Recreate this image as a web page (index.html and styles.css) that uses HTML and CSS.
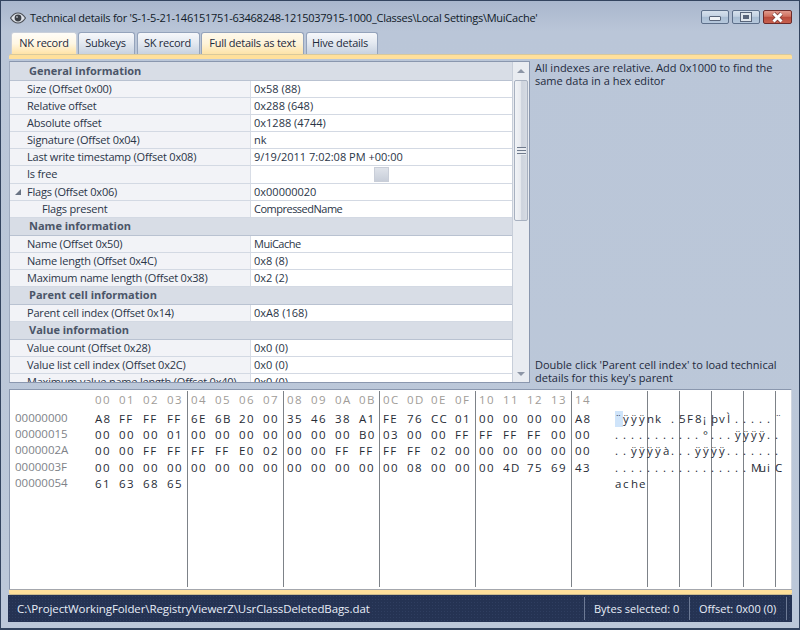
FILE: index.html
```html
<!DOCTYPE html>
<html>
<head>
<meta charset="utf-8">
<title>Technical details</title>
<link rel="stylesheet" href="styles.css">
</head>
<body>
<div class="window">
  <header class="titlebar">
    <svg class="eye" width="16" height="12" viewBox="0 0 16 12"><path d="M.5 6C3 2.200 5.400 1 8 1s5 1.200 7.500 5C13 9.800 10.600 11 8 11S3 9.800.5 6z" fill="#dfe3ea" stroke="#4b4f56" stroke-width="1.200"/><circle cx="8" cy="6" r="3.400" fill="#3c4046"/><circle cx="7" cy="5" r="1" fill="#a9adb3"/></svg>
    <span class="title">Technical details for 'S-1-5-21-146151751-63468248-1215037915-1000_Classes\Local Settings\MuiCache'</span>
    <div class="controls">
      <div class="ctl"><span class="min-glyph"></span></div>
      <div class="ctl ctl-max"><span class="max-glyph"></span></div>
      <div class="ctl ctl-close"><svg width="15" height="11" viewBox="0 0 15 11"><path d="M3.500 1.500l8 8M11.500 1.500l-8 8" stroke="#7a3a36" stroke-width="4.400" fill="none"/><path d="M3.500 1.500l8 8M11.500 1.500l-8 8" stroke="#fff" stroke-width="3" fill="none"/></svg></div>
    </div>
  </header>

  <nav class="tabs">
    <div class="tab tab-active">NK record</div>
    <div class="tab tab-sub">Subkeys</div>
    <div class="tab tab-sk">SK record</div>
    <div class="tab tab-warm">Full details as text</div>
    <div class="tab tab-hive">Hive details</div>
  </nav>
  <div class="band"></div>

  <main class="main">
    <section class="grid">
      <div class="rows">
        <div class="group g19">General information</div>
        <div class="row"><div class="k">Size (Offset 0x00)</div><div class="v">0x58 (88)</div></div>
        <div class="row"><div class="k">Relative offset</div><div class="v">0x288 (648)</div></div>
        <div class="row"><div class="k">Absolute offset</div><div class="v">0x1288 (4744)</div></div>
        <div class="row"><div class="k">Signature (Offset 0x04)</div><div class="v">nk</div></div>
        <div class="row"><div class="k">Last write timestamp (Offset 0x08)</div><div class="v">9/19/2011 7:02:08 PM +00:00</div></div>
        <div class="row row18"><div class="k">Is free</div><div class="v v-check"><span class="check"></span></div></div>
        <div class="row"><div class="k k-parent"><span class="arrow"></span>Flags (Offset 0x06)</div><div class="v">0x00000020</div></div>
        <div class="row"><div class="k k-child">Flags present</div><div class="v v-text">CompressedName</div></div>
        <div class="group">Name information</div>
        <div class="row"><div class="k">Name (Offset 0x50)</div><div class="v v-text">MuiCache</div></div>
        <div class="row"><div class="k">Name length (Offset 0x4C)</div><div class="v">0x8 (8)</div></div>
        <div class="row"><div class="k">Maximum name length (Offset 0x38)</div><div class="v">0x2 (2)</div></div>
        <div class="group">Parent cell information</div>
        <div class="row"><div class="k">Parent cell index (Offset 0x14)</div><div class="v">0xA8 (168)</div></div>
        <div class="group">Value information</div>
        <div class="row"><div class="k">Value count (Offset 0x28)</div><div class="v">0x0 (0)</div></div>
        <div class="row"><div class="k">Value list cell index (Offset 0x2C)</div><div class="v">0x0 (0)</div></div>
        <div class="row"><div class="k">Maximum value name length (Offset 0x40)</div><div class="v">0x0 (0)</div></div>
      </div>
      <div class="scrollbar">
        <div class="sb-btn"><span class="tri-up"></span></div>
        <div class="thumb"><span class="grip"></span></div>
        <div class="sb-btn sb-btn-end"><span class="tri-down"></span></div>
      </div>
    </section>
    <aside class="notes">
      <p>All indexes are relative. Add 0x1000 to find the same data in a hex editor</p>
      <p>Double click 'Parent cell index' to load technical details for this key's parent</p>
    </aside>
  </main>

  <section class="hex">
    <div class="offsets">
      <div>00000000</div><div>00000015</div><div>0000002A</div><div>0000003F</div><div>00000054</div>
    </div>
    <div class="bytes">
      <div class="hexrow hexhead"><span>00</span><span>01</span><span>02</span><span>03</span><span>04</span><span>05</span><span>06</span><span>07</span><span>08</span><span>09</span><span>0A</span><span>0B</span><span>0C</span><span>0D</span><span>0E</span><span>0F</span><span>10</span><span>11</span><span>12</span><span>13</span><span>14</span></div>
      <div class="hexrow"><span>A8</span><span>FF</span><span>FF</span><span>FF</span><span>6E</span><span>6B</span><span>20</span><span>00</span><span>35</span><span>46</span><span>38</span><span>A1</span><span>FE</span><span>76</span><span>CC</span><span>01</span><span>00</span><span>00</span><span>00</span><span>00</span><span>A8</span></div>
      <div class="hexrow"><span>00</span><span>00</span><span>00</span><span>01</span><span>00</span><span>00</span><span>00</span><span>00</span><span>00</span><span>00</span><span>00</span><span>B0</span><span>03</span><span>00</span><span>00</span><span>FF</span><span>FF</span><span>FF</span><span>FF</span><span>00</span><span>00</span></div>
      <div class="hexrow"><span>00</span><span>00</span><span>FF</span><span>FF</span><span>FF</span><span>FF</span><span>E0</span><span>02</span><span>00</span><span>00</span><span>FF</span><span>FF</span><span>FF</span><span>FF</span><span>02</span><span>00</span><span>00</span><span>00</span><span>00</span><span>00</span><span>00</span></div>
      <div class="hexrow"><span>00</span><span>00</span><span>00</span><span>00</span><span>00</span><span>00</span><span>00</span><span>00</span><span>00</span><span>00</span><span>00</span><span>00</span><span>00</span><span>08</span><span>00</span><span>00</span><span>00</span><span>4D</span><span>75</span><span>69</span><span>43</span></div>
      <div class="hexrow"><span>61</span><span>63</span><span>68</span><span>65</span></div>
    </div>
    <div class="ascii">
      <div class="ascrow"><span class="sel">¨</span><span>ÿ</span><span>ÿ</span><span>ÿ</span><span>n</span><span>k</span><span>&nbsp;</span><span>.</span><span>5</span><span>F</span><span>8</span><span>¡</span><span>þ</span><span>v</span><span>Ì</span><span>.</span><span>.</span><span>.</span><span>.</span><span>.</span><span>¨</span></div>
      <div class="ascrow"><span>.</span><span>.</span><span>.</span><span>.</span><span>.</span><span>.</span><span>.</span><span>.</span><span>.</span><span>.</span><span>.</span><span>°</span><span>.</span><span>.</span><span>.</span><span>ÿ</span><span>ÿ</span><span>ÿ</span><span>ÿ</span><span>.</span><span>.</span></div>
      <div class="ascrow"><span>.</span><span>.</span><span>ÿ</span><span>ÿ</span><span>ÿ</span><span>ÿ</span><span>à</span><span>.</span><span>.</span><span>.</span><span>ÿ</span><span>ÿ</span><span>ÿ</span><span>ÿ</span><span>.</span><span>.</span><span>.</span><span>.</span><span>.</span><span>.</span><span>.</span></div>
      <div class="ascrow"><span>.</span><span>.</span><span>.</span><span>.</span><span>.</span><span>.</span><span>.</span><span>.</span><span>.</span><span>.</span><span>.</span><span>.</span><span>.</span><span>.</span><span>.</span><span>.</span><span>.</span><span>M</span><span>u</span><span>i</span><span>C</span></div>
      <div class="ascrow"><span>a</span><span>c</span><span>h</span><span>e</span></div>
    </div>
  </section>
  <div class="band band-bottom"></div>

  <footer class="status">
    <span class="path">C:\ProjectWorkingFolder\RegistryViewerZ\UsrClassDeletedBags.dat</span>
    <span class="cell cell-bytes">Bytes selected: 0</span>
    <span class="cell cell-offset">Offset: 0x00 (0)</span>
  </footer>
</div>
</body>
</html>
```

FILE: styles.css
```css
* { box-sizing: border-box; }
html, body { margin: 0; padding: 0; }
body {
  width: 800px;
  height: 630px;
  overflow: hidden;
  font-family: "Open Sans", "Noto Sans", sans-serif;
  font-size: 11px;
  color: #1e2a3c;
}
.window {
  width: 800px;
  height: 630px;
  display: flex;
  flex-direction: column;
  padding: 0 7px 8px;
  border: 1px solid #33445f;
  border-bottom-width: 2px;
  background: linear-gradient(#a9b7cd 0, #bac6d8 30px, #bcc8d9 100%);
}
.titlebar {
  height: 29px;
  flex: none;
  display: flex;
  align-items: center;
}
.eye { margin: 4px 4px 0 2px; flex: none; }
.title { color: #101a28; font-size: 11px; letter-spacing: -0.250px; white-space: nowrap; margin-top: 4px; }
.controls { margin-left: auto; display: flex; gap: 3px; margin-top: 3px; }
.ctl {
  width: 28px;
  height: 14px;
  border: 1px solid #5d6f8a;
  border-radius: 2px;
  background: linear-gradient(#d6e0ec 0, #c3d1e2 45%, #a9bdd3 50%, #b6c8dc 100%);
  display: flex;
  align-items: center;
  justify-content: center;
}
.ctl-close {
  width: 29px;
  border-color: #6b2a2a;
  background: linear-gradient(#e09a8e 0, #d0705f 45%, #b84a3c 50%, #c8604e 100%);
}
.min-glyph {
  width: 12px;
  height: 5px;
  margin-top: 3px;
  background: #eef1f5;
  border: 1px solid #59657a;
  border-radius: 1px;
}
.max-glyph {
  width: 12px;
  height: 10px;
  background: #dfe5ec;
  border: 3px solid #dfe5ec;
  outline: 1px solid #59657a;
  outline-offset: -1px;
  box-shadow: inset 0 0 0 2px #59657a;
}

.tabs {
  flex: none;
  display: flex;
  margin: 2px 0 0 3px;
  height: 22px;
  gap: 1px;
}
.tab {
  height: 22px;
  border: 1px solid #94a3bb;
  border-bottom: 0;
  border-radius: 3px 3px 0 0;
  display: flex;
  align-items: center;
  justify-content: center;
  color: #1e2a3c;
  letter-spacing: -0.250px;
  background: linear-gradient(#f6f8fb 0, #e5eaf1 45%, #c8d2e0 100%);
  padding-bottom: 3px;
}
.tab-active { width: 66px; border-color: #c9cfda; background: linear-gradient(#fffdf8 0, #fff7e4 50%, #ffe3a6 100%); }
.tab-sub { width: 57px; padding-right: 2px; }
.tab-sk { width: 63px; margin-left: 1px; padding-right: 2px; }
.tab-warm { width: 103px; background: linear-gradient(#fff9ec 0, #fdf3d8 50%, #fde3a8 100%); }
.tab-hive { width: 72px; margin-left: 1px; padding-right: 4px; }

.band {
  flex: none;
  height: 5px;
  margin: 0 0 2px 1px;
  background: #ffe09b;
  border-top: 1px solid #d8c99c;
  border-radius: 2px 2px 0 0;
}
.band-bottom {
  margin: 0 0 0 1px;
  height: 6px;
  border-top: 1px solid #a4a7ad;
  border-radius: 0 0 2px 2px;
  border-bottom: 1px solid #cdbb8c;
}

.main { flex: none; height: 322px; display: flex; }
.grid {
  width: 521px;
  margin-left: 1px;
  height: 322px;
  flex: none;
  display: flex;
  border: 1px solid #8a97ae;
  border-left: 1px solid #a0acc0;
  background: #e8ebf1;
}
.rows { width: 502px; height: 320px; overflow: hidden; flex: none; }
.group {
  height: 18px;
  border-bottom: 1px solid #b9c2d1;
  background: #d8dde6;
  color: #4b5568;
  font-weight: 700;
  padding-left: 19px;
  line-height: 15px;
}
.g19 { height: 19px; line-height: 18px; }
.row { height: 17px; display: flex; border-bottom: 1px solid #d3d9e3; }
.row18 { height: 18px; }
.k {
  width: 241px;
  flex: none;
  background: #f2f3f7;
  padding-left: 17px;
  line-height: 16px;
  letter-spacing: -0.200px;
  white-space: nowrap;
  overflow: hidden;
  border-right: 1px solid #d8dde6;
  color: #2a3547;
}
.k-parent { position: relative; }
.k-child { padding-left: 32px; }
.arrow {
  position: absolute;
  left: 5px;
  top: 5px;
  border-style: solid;
  border-width: 0 0 6px 6px;
  border-color: transparent transparent #6a7484 transparent;
}
.v {
  flex: 1;
  background: #fff;
  padding-left: 3px;
  line-height: 16px;
  white-space: nowrap;
  color: #2a3547;
}
.v-text { letter-spacing: -0.500px; }
.v-check { display: flex; align-items: center; padding-left: 123px; }
.check {
  width: 15px;
  height: 15px;
  border: 1px solid #eef0f4;
  background: linear-gradient(#dfe3ea, #c8ced9);
  outline: 1px solid #c9ced8;
  outline-offset: -1px;
}

.scrollbar {
  width: 17px;
  height: 320px;
  flex: none;
  display: flex;
  flex-direction: column;
  background: #e9ecf1;
  border-left: 1px solid #c7ced9;
}
.sb-btn { height: 17px; flex: none; display: flex; align-items: center; justify-content: center; }
.sb-btn-end { margin-top: auto; }
.tri-up { border-style: solid; border-width: 0 4px 4px; border-color: transparent transparent #8d96a6; }
.tri-down { border-style: solid; border-width: 4px 4px 0; border-color: #8d96a6 transparent transparent; }
.thumb {
  height: 141px;
  margin: 1px 1px 0;
  flex: none;
  border: 1px solid #a8b1c0;
  border-radius: 2px;
  background: linear-gradient(90deg, #f1f3f6 0, #e7eaef 45%, #cdd3dd 55%, #d6dbe3 100%);
  display: flex;
  align-items: center;
  justify-content: center;
}
.grip {
  width: 9px;
  height: 8px;
  background: repeating-linear-gradient(#6f7a8c 0 1px, #e9ecf1 1px 3px);
}

.notes {
  flex: 1;
  padding: 0 8px 0 5px;
  display: flex;
  flex-direction: column;
  justify-content: space-between;
  line-height: 13px;
  color: #1e2a3c;
}
.notes p { margin: 0; }
.notes p:last-child { width: 250px; margin-bottom: -1px; }

.hex {
  flex: none;
  height: 200px;
  margin: 6px 0 0 1px;
  display: flex;
  background: #fff;
  border-top: 1px solid #8a97ae;
  border-left: 1px solid #8a97ae;
  border-right: 1px solid #cfd5df;
  padding-bottom: 2px;
  overflow: hidden;
}
.offsets {
  width: 81px;
  flex: none;
  padding: 20px 0 0 5px;
  color: #7e8288;
  font-size: 11.500px;
}
.offsets div { height: 16.200px; line-height: 16px; }
.bytes {
  width: 504px;
  flex: none;
  padding-top: 1px;
  background-image: repeating-linear-gradient(90deg, transparent 0 95px, #7d8288 95px 96px);
  background-position: 1px 0;
  margin-top: 1px;
}
.hexrow { display: flex; height: 16.200px; line-height: 16px; color: #262c36; font-size: 11.500px; letter-spacing: 1.300px; }
.hexrow span { width: 24px; padding-left: 4px; flex: none; }
.hexhead { height: 19px; color: #a09c98; line-height: 15px; }
.ascii {
  width: 188px;
  flex: none;
  margin-top: 1px;
  padding: 20px 0 0 20px;
  font-size: 11.500px;
  color: #262c36;
  background-image: repeating-linear-gradient(90deg, transparent 0 31px, #7d8288 31px 32px);
  background-position: 21px 0;
}
.ascrow { display: flex; height: 16.200px; line-height: 16px; }
.ascrow span { width: 8px; flex: none; }
.ascrow .sel { background: #cfe4fa; }

.status {
  flex: none;
  height: 27px;
  display: flex;
  align-items: center;
  background-color: #253353;
  background-image: radial-gradient(#2f3e60 0.6px, transparent 0.8px);
  background-size: 3px 3px;
  color: #e8eef8;
}
.path { padding-left: 9px; font-size: 11.500px; letter-spacing: -0.090px; }
.cell { border-left: 1px solid #6d7a95; padding-left: 9px; height: 23px; line-height: 23px; }
.cell-bytes { margin-left: auto; width: 105px; }
.cell-offset { width: 98px; border-right: 1px solid #6d7a95; margin-right: 5px; }
```
